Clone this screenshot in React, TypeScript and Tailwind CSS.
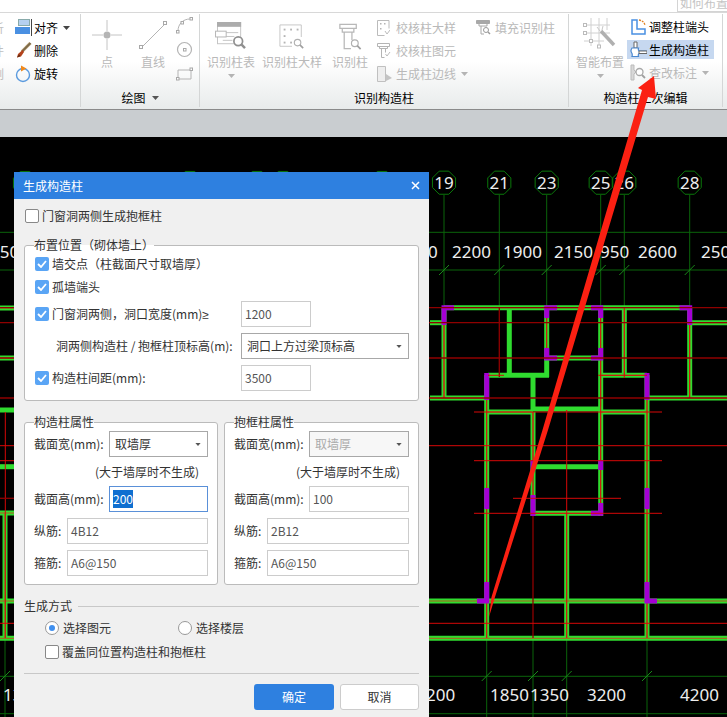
import React from 'react';

const Caret = ({ className = 'text-[#555]', small }: { className?: string; small?: boolean }) => (
  <svg width={small ? 6 : 7} height={small ? 3 : 4} viewBox="0 0 7 4" className={`shrink-0 ${className}`}>
    <path d="M0 0h7L3.5 4z" fill="currentColor" />
  </svg>
);

// Ribbon icons
const AlignIcon = () => (
  <svg width="17" height="17" viewBox="0 0 17 17">
    <rect x="3.5" y="0.5" width="11" height="6" fill="#b5d0f0" stroke="#8aa" />
    <rect x="0" y="8" width="15" height="7" fill="#4a90e2" />
    <path d="M16.5 0v17" stroke="#444" />
  </svg>
);

const BrushIcon = () => (
  <svg width="17" height="17" viewBox="0 0 17 17">
    <path d="M15.5 1 7 9.500" stroke="#a58a5c" strokeWidth="3" />
    <path d="M15.500 1 7.500 9" stroke="#333" strokeWidth="0.7" />
    <path d="M7.500 8 9 10 6 14.500 2 15.500 3 12z" fill="#b4431c" />
    <path d="M2 15.500 4 12.500 5.500 14z" fill="#5a2a10" />
  </svg>
);

const RotateIcon = () => (
  <svg width="17" height="18" viewBox="0 0 17 18">
    <circle cx="8" cy="10" r="6.500" fill="none" stroke="#5a9ade" strokeWidth="1.400" />
    <path d="M6 0.500 11.500 3.500 6 6.500z" fill="#f08a1d" />
  </svg>
);

const PointIcon = () => (
  <svg width="30" height="30" viewBox="0 0 30 30">
    <path d="M15 0v11M15 19v11M0 15h11M19 15h11" stroke="#c4c4c4" />
    <circle cx="15" cy="15" r="3.500" fill="#b4b4b4" />
  </svg>
);

const LineIcon = () => (
  <svg width="30" height="30" viewBox="0 0 30 30">
    <path d="M4 27 27 4" stroke="#b4b4b4" />
    <rect x="1.500" y="25.500" width="3" height="3" fill="#fff" stroke="#a8a8a8" />
    <rect x="25.500" y="1.500" width="3" height="3" fill="#fff" stroke="#a8a8a8" />
  </svg>
);

const ArcIcon = () => (
  <svg width="17" height="17" viewBox="0 0 17 17">
    <path d="M2 14C2 7 7 2 14 2" fill="none" stroke="#b4b4b4" />
    <g fill="#fff" stroke="#a8a8a8">
      <rect x="0.500" y="13.500" width="2.500" height="2.500" />
      <rect x="5" y="4.500" width="2.500" height="2.500" />
      <rect x="14" y="0.500" width="2.500" height="2.500" />
    </g>
  </svg>
);

const CircleIcon = () => (
  <svg width="17" height="17" viewBox="0 0 17 17">
    <circle cx="8.500" cy="8.500" r="7" fill="none" stroke="#b4b4b4" strokeWidth="1.200" />
    <rect x="7.500" y="7.500" width="2.500" height="2.500" fill="#fff" stroke="#a8a8a8" />
  </svg>
);

const RectIcon = () => (
  <svg width="17" height="14" viewBox="0 0 17 14">
    <path d="M2 3h13v9H2z" fill="none" stroke="#b4b4b4" />
    <rect x="0.500" y="10.500" width="2.500" height="2.500" fill="#fff" stroke="#a8a8a8" />
    <rect x="14" y="1" width="2.500" height="2.500" fill="#fff" stroke="#a8a8a8" />
  </svg>
);

const Lens = ({ x, y, r = 3.500 }: { x: number; y: number; r?: number }) => (
  <g>
    <circle cx={x} cy={y} r={r} fill="#fff" stroke="#b0b0b0" strokeWidth="1.200" />
    <path d={`M${x + r - 1} ${y + r - 1}l${r} ${r}`} stroke="#a0a0a0" strokeWidth="1.800" />
  </g>
);

const TableIcon = () => (
  <svg width="32" height="28" viewBox="0 0 33 29">
    <rect x="2.500" y="0.500" width="24" height="22" fill="#fff" stroke="#c4c4c4" />
    <rect x="2" y="0" width="25" height="5" fill="#acacac" />
    <path d="M8 11h16M8 15h12M8 19h10" stroke="#c4c4c4" />
    <rect x="0.500" y="9.500" width="11" height="6" fill="#fff" stroke="#b4b4b4" />
    <circle cx="24" cy="20" r="4.500" fill="#fff" stroke="#909090" strokeWidth="1.800" />
    <path d="m27 23 4 4" stroke="#909090" strokeWidth="2.500" />
  </svg>
);

const DetailIcon = () => (
  <svg width="26" height="26" viewBox="0 0 28 28">
    <path d="M1 1h23v13M1 1v23h13" fill="none" stroke="#c4c4c4" />
    <g fill="#b4b4b4">
      <rect x="5" y="5" width="2" height="2" />
      <rect x="12" y="5" width="2" height="2" />
      <rect x="19" y="5" width="2" height="2" />
      <rect x="5" y="12" width="2" height="2" />
      <rect x="5" y="19" width="2" height="2" />
      <rect x="12" y="19" width="2" height="2" />
    </g>
    <Lens x={20} y={20} />
  </svg>
);

const ColumnIcon = () => (
  <svg width="24" height="27" viewBox="0 0 24 28">
    <path d="M1.500 1.500h17v4h-17zM4 5.500v4h12v-4M6 9.500v17h7M14 9.500v8" fill="none" stroke="#b8b8b8" strokeWidth="1.300" />
    <Lens x={17} y={21} />
  </svg>
);

const CheckDetailIcon = () => (
  <svg width="13" height="16" viewBox="0 0 13 16">
    <path d="M.5.500h11.500v8M.5.500v15h7" fill="none" stroke="#bbb" />
    <g fill="#b4b4b4">
      <rect x="3" y="3" width="1.500" height="1.500" />
      <rect x="7" y="3" width="1.500" height="1.500" />
      <rect x="3" y="8" width="1.500" height="1.500" />
    </g>
    <path d="m8 11 2 3 3-4" fill="none" stroke="#bbb" />
  </svg>
);

const CheckColumnIcon = () => (
  <svg width="14" height="15" viewBox="0 0 14 15">
    <path d="M.5.500h12v3h-12zM2.500 3.500v2h8v-2M4.500 5.500v9h3M8.500 5.500v4" fill="none" stroke="#b4b4b4" />
    <path d="m8.500 11 1.500 2 3-4" fill="none" stroke="#bbb" />
  </svg>
);

const EdgeIcon = () => (
  <svg width="15" height="16" viewBox="0 0 15 16">
    <path d="M.5.500h8v15h-8z" fill="#eee" stroke="#c0c0c0" />
    <path d="m9 8 6 4-6 3z" fill="#c4c4c4" />
  </svg>
);

const FillIcon = () => (
  <svg width="15" height="15" viewBox="0 0 15 15">
    <path d="M.5.500h13v3H.5z" fill="#a8a8a8" stroke="#a8a8a8" />
    <path d="M3 4v2h8V4M5 6v8h3" fill="none" stroke="#a8a8a8" />
    <circle cx="10" cy="10" r="2.500" fill="#fff" stroke="#999" />
    <path d="m12 12 2 2" stroke="#999" strokeWidth="1.500" />
  </svg>
);

const SmartIcon = () => (
  <svg width="34" height="32" viewBox="0 0 34 32">
    <path d="M1 7h26M1 15h26M1 23h20M8 0v28M16 0v30M24 0v12" stroke="#d0d0d0" />
    <g fill="#fff" stroke="#bbb">
      <rect x="0.500" y="5.500" width="3" height="3" />
      <rect x="0.500" y="13.500" width="3" height="3" />
      <rect x="6.500" y="21.500" width="3" height="3" />
      <rect x="14.500" y="27" width="3" height="3" />
    </g>
    <path d="m18 13 13 14" stroke="#b0b0b0" strokeWidth="3.500" />
    <path d="m14 9 3 4M20 8l-1 4" stroke="#c8c8c8" />
  </svg>
);

const AdjustIcon = () => (
  <svg width="15" height="16" viewBox="0 0 15 16">
    <path d="M1 1h5v9h8v5H1z" fill="#fff" stroke="#4a90e2" strokeWidth="1.500" />
    <path d="M8 1c3 .5 5 2 6 5" fill="none" stroke="#e08020" strokeWidth="1.300" strokeDasharray="2 1" />
  </svg>
);

const GenerateIcon = () => (
  <svg width="17" height="18" viewBox="0 0 17 18">
    <path d="M4 1h3v6H4z" fill="#fff" stroke="#666" />
    <path d="M2 7h6.500c-.5 1.500-.5 2 .5 3H16v2.500H9c-1 1-1 1.500-.5 3H2c.5-1.500.5-2.500-.5-4s-.500-3 .5-4.500z" fill="#fff" stroke="#4a88d0" strokeWidth="1.200" />
    <path d="M9 10h8v2.500H9z" fill="#fff" stroke="#666" />
  </svg>
);

const EditMarkIcon = () => (
  <svg width="16" height="17" viewBox="0 0 16 17">
    <path d="M1 1h3v5l2 2-2 2v6H1z" fill="#d8d8d8" stroke="#bbb" />
    <circle cx="9.500" cy="8" r="3.500" fill="#fff" stroke="#a8a8a8" strokeWidth="1.300" />
    <path d="m12 11 3 3" stroke="#a0a0a0" strokeWidth="1.800" />
  </svg>
);

const RibbonRow = ({
  icon,
  label,
  gray,
  caret,
}: {
  icon: React.ReactNode;
  label: string;
  gray?: boolean;
  caret?: boolean;
}) => (
  <div className={`flex h-[23px] items-center whitespace-nowrap ${gray ? 'text-[#b9b9b9]' : 'text-black'}`}>
    {icon}
    <span>{label}</span>
    {caret && (
      <span className="ml-[5px]">
        <Caret className={gray ? 'text-[#b4b4b4]' : 'text-[#444]'} />
      </span>
    )}
  </div>
);

const BigButton = ({
  icon,
  label,
  width,
  caret,
  iconH = 'h-[38px] pb-[2px]',
}: {
  icon: React.ReactNode;
  label: string;
  width: string;
  caret?: boolean;
  iconH?: string;
}) => (
  <div className={`flex flex-col items-center text-[#b9b9b9] whitespace-nowrap ${width}`}>
    <div className={`flex items-end ${iconH}`}>{icon}</div>
    <div className="mt-[1px] leading-[18px]">{label}</div>
    {caret && (
      <div className="mt-[3px]">
        <Caret className="text-[#b4b4b4]" />
      </div>
    )}
  </div>
);

const GroupLabel = ({ children }: { children: React.ReactNode }) => (
  <div className="flex h-[18px] shrink-0 items-center justify-center gap-[6px] text-black">{children}</div>
);

const Ribbon = () => (
  <div className="flex h-[98px] border-t border-b border-t-[#d8d8d8] border-b-[#8a8a8a] bg-linear-to-b from-white from-50% to-[#e8ebeb] pt-[1px] pb-[2px] text-[12px]">
    {/* edit group, cut off on the left */}
    <div className="flex w-[81px] shrink-0 flex-col border-r border-[#d4d6d6]">
      <div className="flex flex-1 pt-[2px]">
        <div className="w-[15px] shrink-0 overflow-hidden text-[#c0c0c0]">
          <div className="-ml-[8px]">
            <div className="flex h-[23px] items-center">析</div>
            <div className="flex h-[23px] items-center">件</div>
            <div className="flex h-[23px] items-center">例</div>
          </div>
        </div>
        <div>
          <RibbonRow
            icon={<span className="mr-[2px]"><AlignIcon /></span>}
            label="对齐"
            caret
          />
          <RibbonRow icon={<span className="mr-[2px]"><BrushIcon /></span>} label="删除" />
          <RibbonRow icon={<span className="mr-[2px]"><RotateIcon /></span>} label="旋转" />
        </div>
      </div>
    </div>

    {/* draw group */}
    <div className="flex w-[119px] shrink-0 flex-col border-r border-[#d4d6d6]">
      <div className="flex flex-1 pl-[10px] pt-[2px]">
        <BigButton icon={<PointIcon />} label="点" width="w-[32px]" iconH="h-[36px] pb-[2px]" />
        <div className="ml-[7px]">
          <BigButton icon={<LineIcon />} label="直线" width="w-[46px]" iconH="h-[36px] pb-[2px]" />
        </div>
        <div className="mt-[1px] flex flex-col gap-[7px]">
          <ArcIcon />
          <CircleIcon />
          <span className="mt-[2px]"><RectIcon /></span>
        </div>
      </div>
      <GroupLabel>
        绘图 <Caret />
      </GroupLabel>
    </div>

    {/* recognise group */}
    <div className="flex w-[369px] shrink-0 flex-col border-r border-[#d4d6d6]">
      <div className="flex flex-1 pl-[7px]">
        <BigButton icon={<TableIcon />} label="识别柱表" width="w-[48px]" caret />
        <div className="ml-[7px]">
          <BigButton icon={<DetailIcon />} label="识别柱大样" width="w-[60px]" />
        </div>
        <div className="ml-[10px]">
          <BigButton icon={<ColumnIcon />} label="识别柱" width="w-[36px]" />
        </div>
        <div className="ml-[9px] pt-[2px]">
          <RibbonRow icon={<span className="mr-[6px]"><CheckDetailIcon /></span>} label="校核柱大样" gray />
          <RibbonRow icon={<span className="mr-[5px]"><CheckColumnIcon /></span>} label="校核柱图元" gray />
          <RibbonRow icon={<span className="mr-[4px]"><EdgeIcon /></span>} label="生成柱边线" gray caret />
        </div>
        <div className="ml-[8px] pt-[2px]">
          <RibbonRow icon={<span className="mr-[4px]"><FillIcon /></span>} label="填充识别柱" gray />
        </div>
      </div>
      <GroupLabel>识别构造柱</GroupLabel>
    </div>

    {/* secondary edit group */}
    <div className="flex w-[154px] shrink-0 flex-col border-r border-[#d4d6d6]">
      <div className="flex flex-1 pl-[7px]">
        <BigButton icon={<SmartIcon />} label="智能布置" width="w-[48px]" caret />
        <div className="ml-[3px] w-[87px] pt-[1px]">
          <div className="pl-[4px]">
            <RibbonRow icon={<span className="mr-[3px]"><AdjustIcon /></span>} label="调整柱端头" />
          </div>
          <div className="my-[2px] flex h-[19px] items-center bg-[#c6d8f0] pl-[3px] text-black">
            <span className="mr-[2px]"><GenerateIcon /></span>
            <span>生成构造柱</span>
          </div>
          <div className="pl-[3px]">
            <RibbonRow icon={<span className="mr-[3px]"><EditMarkIcon /></span>} label="查改标注" gray caret />
          </div>
        </div>
      </div>
      <GroupLabel>构造柱二次编辑</GroupLabel>
    </div>
  </div>
);

// CAD drawing data
const topAxes: [number, string][] = [
  [444, '19'],
  [499.3, '21'],
  [546.7, '23'],
  [600.7, '25'],
  [624.3, '26'],
  [689.7, '28'],
];
const hiddenAxes = [25, 190, 257, 283, 382];
const bottomAxes = [5, 486.7, 533, 566.7, 647];

type Seg = [number, number, number, number];

const walls: Seg[] = [
  [444, 307.7, 689.7, 307.7],
  [0, 308, 14, 308],
  [0, 358, 14, 358],
  [430, 322.7, 444, 322.7],
  [689.7, 322.7, 727, 322.7],
  [430, 398, 486.7, 398],
  [647, 398, 727, 398],
  [444, 307.7, 444, 398],
  [689.7, 307.7, 689.7, 398],
  [546.7, 307.7, 546.7, 360],
  [600.7, 307.7, 600.7, 516],
  [486.7, 375, 486.7, 638],
  [647, 375, 647, 638],
  [533, 412, 533, 516],
  [566.7, 513, 566.7, 638],
  [624.3, 310, 624.3, 375],
  [5, 513, 5, 638],
  [546.7, 358, 600.7, 358],
  [600.7, 375.300, 647, 375.300],
  [486.7, 412, 533, 412],
  [600.7, 412, 647, 412],
  [533, 513.300, 600.7, 513.300],
  [0, 513, 14, 513],
  [0, 601, 727, 601],
  [0, 638.300, 727, 638.300],
];

const thick: Seg[] = [
  [509.3, 310, 509.3, 377],
  [488, 375.300, 549, 375.300],
  [546.7, 358, 546.7, 377],
  [533, 375, 533, 411],
  [531, 409, 602, 409],
  [533, 466.7, 600.7, 466.7],
  [0, 410, 14, 410],
  [0, 466.7, 14, 466.7],
];

const purple: string[] = [
  'M454 307.7H444V325',
  'M557 307.7H546.7V318',
  'M591 307.7H600.7V318',
  'M679.500 307.7H689.7V325',
  'M546.7 348V358H557',
  'M600.7 348V358H591',
  'M486.7 373V400',
  'M647 373V400',
  'M533 460V470',
  'M600.7 460V470',
  'M533 495V516',
  'M600.7 503V513.300H591',
  'M486.7 488V509',
  'M647 488V509',
  'M486.7 582V601H477',
  'M647 582V601H657',
];

const darkRed: Seg[] = [
  [0, 307.7, 727, 307.7],
  [0, 322.7, 727, 322.7],
  [0, 358, 727, 358],
  [0, 398, 727, 398],
  [0, 498.3, 14, 498.3],
  [499.3, 307.7, 499.3, 377],
  [533, 516, 533, 638],
];

const red: Seg[] = [
  [0, 445.7, 727, 445.7],
  [0, 623.3, 727, 623.3],
  [0, 460.7, 14, 460.7],
  [474, 460.7, 662, 460.7],
  [474, 513.3, 662, 513.3],
  [474, 412, 662, 412],
  [513, 498.3, 621, 498.3],
  [488, 375.300, 504, 375.300],
  [598, 375.300, 647, 375.300],
  [624.3, 307.7, 624.3, 378],
  [566.7, 410, 566.7, 638],
  [5.3, 412, 5.3, 638],
  [486.7, 398, 486.7, 638],
  [647, 398, 647, 638],
  [600.7, 318, 600.7, 516],
  [533, 412, 533, 516],
  [444, 325, 444, 398],
  [689.7, 325, 689.7, 398],
  [546.7, 318, 546.7, 348],
];

const isFlat = (s: Seg) => s[1] === s[3];

const labels: [number, number, string][] = [
  [-10, 258, '250'],
  [428, 258, '0'],
  [452, 258, '2200'],
  [503, 258, '1900'],
  [554, 258, '2150'],
  [600, 258, '950'],
  [638, 258, '2600'],
  [701, 258, '250'],
  [3, 701, '13'],
  [426, 701, '200'],
  [490, 701, '1850'],
  [530, 701, '1350'],
  [587, 701, '3200'],
  [680, 701, '4200'],
];

const octagon = (cx: number, cy: number, r: number) =>
  Array.from({ length: 8 }, (_, i) => {
    const a = Math.PI / 8 + (i * Math.PI) / 4;
    return `${cx + r * Math.cos(a)},${cy + r * Math.sin(a)}`;
  }).join(' ');

const line = (s: Seg, stroke: string, w: number, key: string) => (
  <line key={key} x1={s[0]} y1={s[1]} x2={s[2]} y2={s[3]} stroke={stroke} strokeWidth={w} />
);

const CadDrawing = () => (
  <svg width="727" height="580" viewBox="0 137 727 580" className="block font-['Noto_Sans',sans-serif]">
    <rect x="0" y="137" width="727" height="580" fill="#000" />
    {/* axes and dimension lines */}
    <path d="M0 232.300H727M0 270H727M0 676.300H727M0 713.700H727" stroke="#0a640a" strokeWidth="1" />
    {topAxes.map(([x]) => line([x, 195, x, 307], '#0a640a', 1, `a${x}`))}
    {bottomAxes.map((x) => line([x, 638, x, 717], '#0a640a', 1, `b${x}`))}
    {topAxes.map(([x]) => line([x - 5, 275, x + 5, 265], '#1a8a1a', 1, `t${x}`))}
    {bottomAxes.map((x) => line([x - 5, 681, x + 5, 671], '#1a8a1a', 1, `u${x}`))}
    {hiddenAxes.map((x) => (
      <polygon key={x} points={octagon(x, 183, 12.500)} fill="#000" stroke="#0a780a" />
    ))}
    {topAxes.map(([x, n]) => (
      <g key={n}>
        <polygon points={octagon(x, 182.7, 12.500)} fill="#000" stroke="#0a780a" />
        <text x={x} y="188.500" textAnchor="middle" fontSize="17" fill="#eee">
          {n}
        </text>
      </g>
    ))}
    {labels.map(([x, y, t]) => (
      <text key={`${x}${t}`} x={x} y={y} fontSize="17" fill="#eee">
        {t}
      </text>
    ))}
    {/* walls */}
    {walls.map((s, i) => line(s, '#2fdc2f', 5, `w${i}`))}
    {walls.map((s, i) => line(s, '#b05a20', 1, `c${i}`))}
    {thick.map((s, i) => line(s, '#2fdc2f', 5, `k${i}`))}
    {darkRed.filter((s) => !isFlat(s)).map((s, i) => line(s, '#8f0000', 1.300, `dv${i}`))}
    {red.filter((s) => !isFlat(s)).map((s, i) => line(s, '#d80808', 1, `rv${i}`))}
    {purple.map((d) => (
      <path key={d} d={d} fill="none" stroke="#a400d4" strokeWidth="5" />
    ))}
    {/* the long horizontal lines run over the purple columns */}
    {darkRed.filter(isFlat).map((s, i) => line(s, '#8f0000', 1.300, `dh${i}`))}
    {red.filter(isFlat).map((s, i) => line(s, '#d80808', 1, `rh${i}`))}
  </svg>
);

// Dialog parts
const Check = ({ on }: { on?: boolean }) =>
  on ? (
    <span className="flex h-[14px] w-[14px] shrink-0 items-center justify-center rounded-[2px] bg-[#5aa5f5]">
      <svg width="10" height="8" viewBox="0 0 10 8">
        <path d="m1 4 3 3 5-6" fill="none" stroke="#fff" strokeWidth="1.800" />
      </svg>
    </span>
  ) : (
    <span className="h-[14px] w-[14px] shrink-0 rounded-[2px] border border-[#888] bg-white" />
  );

const Radio = ({ on }: { on?: boolean }) => (
  <span className="flex h-[14px] w-[14px] shrink-0 items-center justify-center rounded-full border border-[#999] bg-white">
    {on && <span className="h-[6px] w-[6px] rounded-full bg-[#3f8fef]" />}
  </span>
);

const TextBox = ({ value, width }: { value: React.ReactNode; width: string }) => (
  <div className={`flex h-[26px] shrink-0 items-center border border-[#cccccc] bg-white px-[3px] text-[#555] ${width}`}>
    {value}
  </div>
);

const SelectBox = ({ value, width, disabled }: { value: string; width: string; disabled?: boolean }) => (
  <div
    className={`flex h-[26px] shrink-0 items-center justify-between border border-[#a8a8a8] pl-[5px] pr-[6px] ${width} ${
      disabled ? 'bg-[#f7f7f7] text-[#aaa]' : 'bg-white text-[#333]'
    }`}
  >
    <span>{value}</span>
    <Caret small />
  </div>
);

const Legend = ({ children }: { children: React.ReactNode }) => (
  <span className="absolute -top-[7px] left-[9px] bg-linear-to-b from-[#f0f0f0] from-50% to-white to-50% leading-[12px]">
    {children}
  </span>
);

const PropsGroup = ({
  legend,
  width,
  labelW,
  noteMl,
  wide,
  high,
  main,
  stirrup,
}: {
  legend: string;
  width: string;
  labelW: string;
  noteMl: string;
  wide: React.ReactNode;
  high: React.ReactNode;
  main: React.ReactNode;
  stirrup: React.ReactNode;
}) => (
  <div className={`relative h-[163px] rounded-[3px] border border-[#bbb] bg-white pl-[9px] pt-[8px] ${width}`}>
    <Legend>{legend}</Legend>
    <div className="flex items-center">
      <span className={labelW}>截面宽(mm):</span>
      {wide}
    </div>
    <div className={`mt-[6px] h-[18px] leading-[18px] ${noteMl}`}>(大于墙厚时不生成)</div>
    <div className="mt-[5px] flex items-center">
      <span className={labelW}>截面高(mm):</span>
      {high}
    </div>
    <div className="mt-[6px] flex items-center">
      <span className="w-[33px]">纵筋:</span>
      {main}
    </div>
    <div className="mt-[6px] flex items-center">
      <span className="w-[33px]">箍筋:</span>
      {stirrup}
    </div>
  </div>
);

const Dialog = () => (
  <div className="absolute left-[14px] top-[172px] w-[415px] text-[12px] text-[#333]">
    <div className="flex h-[27px] items-center justify-between bg-[#2e80e0] pl-[9px] pr-[9px] text-white">
      <span>生成构造柱</span>
      <svg width="9" height="9" viewBox="0 0 9 9">
        <path d="m1 1 7 7M8 1 1 8" stroke="#fff" strokeWidth="1.500" />
      </svg>
    </div>
    <div className="h-[530px] bg-[#f0f0f0] px-[10px] pt-[10px]">
      <div className="ml-[1px] flex h-[14px] items-center gap-[3px]">
        <Check />
        <span>门窗洞两侧生成抱框柱</span>
      </div>

      <div className="relative mt-[22px] h-[156px] rounded-[3px] border border-[#bbb] bg-white pl-[10px] pt-[11px]">
        <Legend>布置位置（砌体墙上）</Legend>
        <div className="flex h-[14px] items-center gap-[3px]">
          <Check on />
          <span>墙交点（柱截面尺寸取墙厚）</span>
        </div>
        <div className="mt-[9px] flex h-[14px] items-center gap-[3px]">
          <Check on />
          <span>孤墙端头</span>
        </div>
        <div className="mt-[7px] flex items-center">
          <div className="flex w-[206px] items-center gap-[3px]">
            <Check on />
            <span>
              门窗洞两侧，洞口宽度(mm)<span className="font-['Liberation_Sans',sans-serif]">≥</span>
            </span>
          </div>
          <TextBox value="1200" width="w-[70px]" />
        </div>
        <div className="mt-[6px] flex items-center">
          <span className="w-[206px] pl-[21px]">洞两侧构造柱 / 抱框柱顶标高(m):</span>
          <SelectBox value="洞口上方过梁顶标高" width="w-[168px]" />
        </div>
        <div className="mt-[6px] flex items-center">
          <div className="flex w-[206px] items-center gap-[3px]">
            <Check on />
            <span>构造柱间距(mm):</span>
          </div>
          <TextBox value="3500" width="w-[70px]" />
        </div>
      </div>

      <div className="mt-[21px] flex gap-[6px]">
        <PropsGroup
          legend="构造柱属性"
          width="w-[194px]"
          labelW="w-[75px]"
          noteMl="ml-[61px]"
          wide={<SelectBox value="取墙厚" width="w-[99px]" />}
          high={
            <div className="flex h-[26px] w-[99px] shrink-0 items-center border border-[#5a90d8] bg-white px-[3px]">
              <span className="bg-[#0f6fd0] text-white">200</span>
            </div>
          }
          main={<TextBox value="4B12" width="w-[141px]" />}
          stirrup={<TextBox value="A6@150" width="w-[141px]" />}
        />
        <PropsGroup
          legend="抱框柱属性"
          width="w-[195px]"
          labelW="w-[75px]"
          noteMl="ml-[62px]"
          wide={<SelectBox value="取墙厚" width="w-[100px]" disabled />}
          high={<TextBox value="100" width="w-[100px]" />}
          main={<TextBox value="2B12" width="w-[142px]" />}
          stirrup={<TextBox value="A6@150" width="w-[142px]" />}
        />
      </div>

      <div className="mt-[12px] flex h-[18px] items-center">
        <span>生成方式</span>
        <div className="ml-[6px] h-px flex-1 bg-[#c8c8c8]" />
      </div>
      <div className="mt-[6px] flex h-[14px] items-center pl-[21px]">
        <div className="flex w-[133px] items-center gap-[4px]">
          <Radio on />
          <span>选择图元</span>
        </div>
        <div className="flex items-center gap-[4px]">
          <Radio />
          <span>选择楼层</span>
        </div>
      </div>
      <div className="ml-[21px] mt-[10px] flex h-[14px] items-center gap-[3px]">
        <Check />
        <span>覆盖同位置构造柱和抱框柱</span>
      </div>
      <div className="mt-[14px] h-px bg-[#c8c8c8]" />
      <div className="mt-[10px] flex justify-end gap-[6px]">
        <div className="flex h-[26px] w-[80px] items-center justify-center rounded-[3px] bg-[#2e80e0] text-white">
          确定
        </div>
        <div className="flex h-[26px] w-[79px] items-center justify-center rounded-[3px] border border-[#ccc] bg-white">
          取消
        </div>
      </div>
    </div>
  </div>
);

const RedArrow = () => (
  <svg width="727" height="717" viewBox="0 0 727 717" className="pointer-events-none absolute left-0 top-0">
    <polygon
      points="654,76 638,88 642,90 542.500,430 491.500,597 489,617 495,597 548,430 648,97 656,99"
      fill="#fb2012"
    />
  </svg>
);

export default function App() {
  return (
    <div className="relative flex h-[717px] w-[727px] flex-col overflow-hidden bg-white font-['Noto_Sans_CJK_SC',sans-serif]">
      {/* title strip */}
      <div className="flex h-[12px] shrink-0 items-end justify-end">
        <div className="h-[12px] w-[50px] overflow-hidden whitespace-nowrap border-b border-l border-[#d4d4d4] pl-[2px] text-[12px] leading-[6px] text-[#c4c4c4]">
          如何布置构造柱
        </div>
      </div>
      <Ribbon />
      <div className="h-[27px] shrink-0 bg-[#c9cdd0]" />
      <CadDrawing />
      <Dialog />
      <RedArrow />
    </div>
  );
}
